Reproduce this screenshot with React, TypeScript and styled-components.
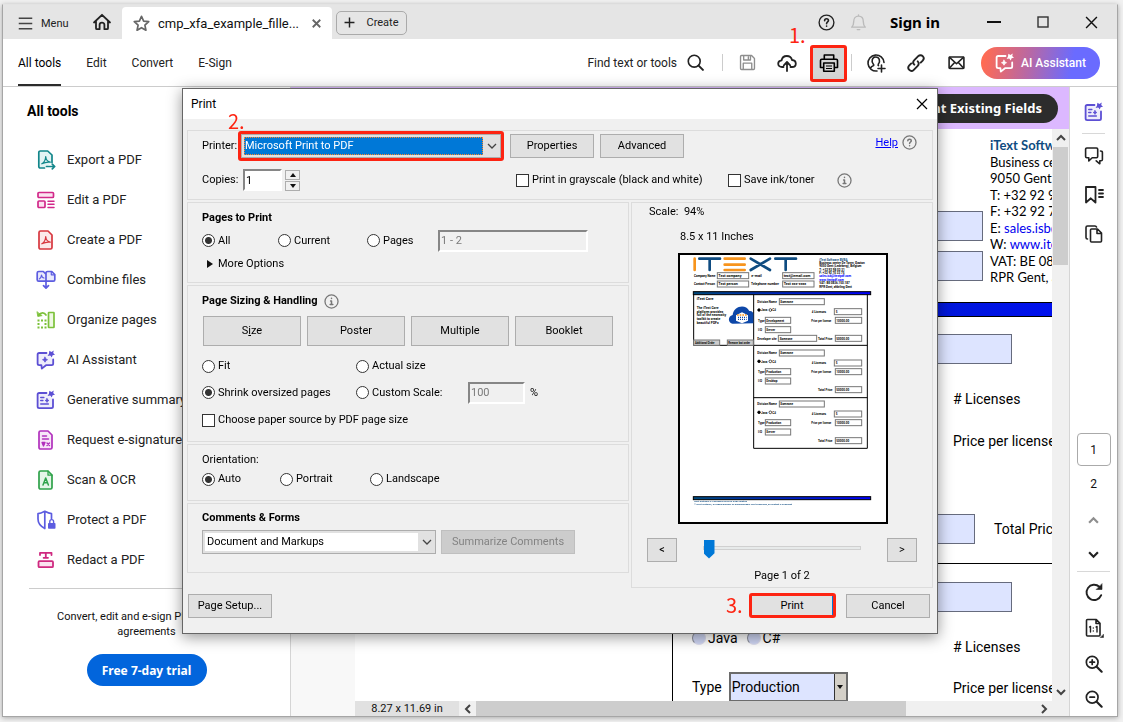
import React from "react";
import styled, { createGlobalStyle, css } from "styled-components";

const ui = `Roboto, "Noto Sans", "Liberation Sans", sans-serif`;

const GlobalStyle = createGlobalStyle`
  *, *::before, *::after { box-sizing: border-box; }
  body { margin: 0; background: #f1f1f1; font-family: ${ui}; font-size: 12px; line-height: 16px; color: #111; }
  button, input, select { font: inherit; color: inherit; margin: 0; padding: 0; border: 0; background: none; border-radius: 0; }
  h1, h2, h3, p, ul { margin: 0; padding: 0; font-weight: inherit; font-size: inherit; list-style: none; }
  fieldset { margin: 0; padding: 0; border: 0; min-width: 0; }
  svg { display: block; flex: none; }
`;

/* ---------- application window ---------- */

const Desktop = styled.div`
  height: 100vh;
  padding: 4px 5px 5px 2px;
  overflow: hidden;
`;

const AppWindow = styled.div`
  height: 100%;
  display: flex;
  flex-direction: column;
  background: #fff;
  border: 1px solid #a6a6a6;
  border-top-color: #e3e3e3;
  box-shadow: 0 1px 5px rgba(0, 0, 0, 0.3);
`;

const TitleBar = styled.header`
  height: 34px;
  flex: none;
  display: flex;
  align-items: center;
  padding-right: 1px;
  background: #e5e5e5;
`;

const FlatButton = styled.button<{ $w: number; $h?: number }>`
  width: ${(p) => p.$w}px;
  height: ${(p) => p.$h ?? 34}px;
  flex: none;
  display: flex;
  align-items: center;
  justify-content: center;
`;

const MenuButton = styled.button`
  display: flex;
  align-items: center;
  gap: 8px;
  width: 80px;
  height: 34px;
  padding: 3px 0 0 15px;
  flex: none;
  font-size: 11px;
  color: #222;
`;

const DocTab = styled.div`
  align-self: flex-end;
  width: 210px;
  height: 32px;
  flex: none;
  display: flex;
  align-items: center;
  gap: 8px;
  margin-left: 2px;
  padding: 1px 10px 0 11px;
  background: #fff;
  border-radius: 4px 4px 0 0;
  font-size: 13px;
`;

const TabName = styled.span`
  flex: 1;
  white-space: nowrap;
`;

const CreateButton = styled.button`
  margin: 1px 0 0 4px;
  height: 24px;
  width: 71px;
  flex: none;
  display: flex;
  align-items: center;
  justify-content: center;
  gap: 11px;
  border: 1px solid #aaa;
  border-radius: 5px;
  font-size: 11px;
  color: #222;
`;

const Spacer = styled.div`
  flex: 1;
`;

const SignIn = styled.button`
  margin: 0 29px 0 15px;
  font-family: "Noto Sans", sans-serif;
  font-weight: 700;
  font-size: 15px;
  color: #000;
  white-space: nowrap;
`;

const Toolbar = styled.nav`
  height: 48px;
  flex: none;
  display: flex;
  align-items: center;
  padding: 0 17px 0 15px;
  border-bottom: 1px solid #ccc;
`;

const ToolTabs = styled.div`
  display: flex;
  gap: 25px;
  align-self: stretch;
`;

const ToolTab = styled.button<{ $active?: boolean }>`
  padding-top: 3px;
  border-bottom: 2px solid ${(p) => (p.$active ? "#2c2c2c" : "transparent")};
  color: ${(p) => (p.$active ? "#000" : "#222")};
  white-space: nowrap;
`;

const SearchButton = styled.button`
  display: flex;
  align-items: center;
  gap: 10px;
  margin-right: 14px;
  color: #222;
  white-space: nowrap;
`;

const Rule = styled.span`
  width: 1px;
  height: 17px;
  margin: 0 4px;
  background: #ccc;
  flex: none;
`;

const PrintButton = styled.button`
  position: relative;
  width: 37px;
  height: 37px;
  margin: 1px 0 0 3px;
  flex: none;
  display: flex;
  align-items: center;
  justify-content: center;
  background: #d5d5d5;
  border: 3px solid #fd2412;
  border-radius: 3px;
`;

const StepNumber = styled.span<{ $left: number; $top: number }>`
  position: absolute;
  left: ${(p) => p.$left}px;
  top: ${(p) => p.$top}px;
  font-family: "Noto Sans CJK SC", "Noto Sans", sans-serif;
  font-size: 20px;
  font-weight: 400;
  line-height: 20px;
  color: #fd2412;
`;

const AssistantButton = styled.button`
  margin-left: 5px;
  width: 119px;
  height: 32px;
  flex: none;
  display: flex;
  align-items: center;
  justify-content: center;
  gap: 6px;
  border-radius: 16px;
  background: linear-gradient(100deg, #ff6b53 4%, #b868a4 40%, #6a6bff 76%);
  color: #fff;
  font-weight: 500;
`;

const Workspace = styled.div`
  flex: 1;
  min-height: 0;
  display: flex;
`;

/* ---------- left tool list ---------- */

const Sidebar = styled.aside`
  width: 288px;
  flex: none;
  border-right: 1px solid #d5d5d5;
  overflow: hidden;
`;

const SideTitle = styled.h2`
  padding: 14px 24px 19px;
  font-size: 14px;
  line-height: 20px;
  font-weight: 700;
  color: #000;
`;

const ToolRow = styled.button`
  height: 40px;
  width: 100%;
  display: flex;
  align-items: center;
  gap: 11px;
  padding-left: 33px;
  font-size: 13px;
  color: #222;
  white-space: nowrap;
`;

const Promo = styled.div`
  margin-left: 26px;
  padding: 20px 26px 0 0;
  border-top: 1px solid #ccc;
  margin-top: 8px;
  display: flex;
  flex-direction: column;
  align-items: center;
  text-align: center;
  font-size: 11px;
  line-height: 15px;
`;

const PromoText = styled.p`
  width: 200px;
`;

const TrialButton = styled.button`
  margin-top: 15px;
  width: 120px;
  height: 32px;
  border-radius: 16px;
  background: #0265dc;
  color: #fff;
  font-family: "Noto Sans", sans-serif;
  font-size: 12px;
  font-weight: 700;
`;

/* ---------- document pane ---------- */

const DocPane = styled.main`
  flex: 1;
  min-width: 0;
  display: flex;
  flex-direction: column;
`;

const FieldsBanner = styled.div`
  height: 42px;
  flex: none;
  display: flex;
  align-items: center;
  justify-content: flex-end;
  padding-right: 11px;
  background: #dcb8ff;
`;

const FieldsButton = styled.button`
  height: 29px;
  padding: 0 16px;
  border-radius: 15px;
  background: #2c2c2c;
  color: #fff;
  font-family: "Noto Sans", sans-serif;
  font-size: 13px;
  font-weight: 700;
`;

const Scroller = styled.div`
  flex: 1;
  min-height: 0;
  display: flex;
  background: #f8f8f8;
`;

const Column = styled.div`
  flex: 1;
  min-width: 0;
  margin-left: 64px;
  display: flex;
  flex-direction: column;
`;

const Sheet = styled.div`
  flex: 1;
  min-height: 0;
  overflow: hidden;
  background: #fff;
  color: #000;
  font-size: 14px;
`;

const SheetHead = styled.div`
  height: 173px;
  display: flex;
  justify-content: flex-end;
`;

const HeadFields = styled.div`
  display: flex;
  flex-direction: column;
  gap: 10px;
  padding-top: 82px;
`;

const FormField = styled.input`
  display: block;
  height: 30px;
  width: 150px;
  background: #dde4ff;
  border: 1px solid #666b7d;
  padding: 0 4px;
`;

const Address = styled.div`
  width: 69px;
  padding: 8px 0 0 7px;
  overflow: hidden;
  white-space: nowrap;
  font-family: Lato, ${ui};
  font-size: 13px;
`;

const AddressLine = styled.p`
  line-height: 17px;
  &:nth-child(even) { line-height: 16px; }
`;

const Company = styled(AddressLine)`
  font-weight: 700;
  color: #0f4c81;
`;

const DocLink = styled.a`
  color: #00e;
  text-decoration: none;
`;

const BlueBar = styled.div`
  height: 15px;
  border: 1px solid #000;
  border-width: 1px 0;
  background: linear-gradient(90deg, #003a70, #0010ee);
`;

const Card = styled.section<{ $pad: number }>`
  margin-left: 317px;
  border-left: 1px solid #000;
  border-bottom: 1px solid #000;
  padding-top: ${(p) => p.$pad}px;
`;

const FieldLine = styled.div`
  padding-left: 189px;
`;

const RightLabel = styled.p<{ $gap: number }>`
  margin-top: ${(p) => p.$gap}px;
  padding-left: 280px;
  line-height: 24px;
  white-space: nowrap;
  overflow: hidden;
`;

const TotalLine = styled.div`
  display: flex;
  align-items: center;
  gap: 19px;
  padding: 0 0 19px 152px;
  margin-top: 61px;
  overflow: hidden;
  white-space: nowrap;
`;

const Split = styled.div`
  display: flex;
  padding-left: 19px;
`;

const SplitLeft = styled.div`
  width: 261px;
  flex: none;
  padding-top: 14px;
`;

const SplitRight = styled.div`
  flex: 1;
  min-width: 0;
  overflow: hidden;
  white-space: nowrap;
  padding-top: 23px;
  line-height: 24px;
`;

const PriceText = styled.p`
  padding-top: 17px;
`;

const LanguageRow = styled.div`
  display: flex;
  gap: 9px;
  height: 24px;
  margin-bottom: 22px;
`;

const LanguageLabel = styled.label`
  display: flex;
  align-items: center;
  gap: 2px;
`;

const SunkenRadio = styled.input.attrs({ type: "radio" })`
  appearance: none;
  width: 14px;
  height: 14px;
  border-radius: 50%;
  background: #cfd6f4;
  border: 1px solid #8c8f9c;
  border-right-color: #dde;
  border-bottom-color: #dde;
`;

const TypeRow = styled.label`
  display: flex;
  align-items: center;
  gap: 7px;
`;

const TypeBox = styled.span`
  width: 119px;
  height: 30px;
  display: flex;
  border: 2px solid #6b6b6b;
  background: #dde4ff;
`;

const TypeSelect = styled.select`
  appearance: none;
  flex: 1;
  min-width: 0;
  padding-left: 1px;
  font-size: 14px;
`;

const TypeArrow = styled.span`
  width: 12px;
  display: flex;
  align-items: center;
  justify-content: center;
  background: #d4d0c8;
  border-left: 1px solid #333;
`;

const BottomBar = styled.div`
  height: 15px;
  flex: none;
  display: flex;
  align-items: center;
  background: #f0f0f0;
`;

const PageSize = styled.span`
  width: 104px;
  align-self: stretch;
  display: flex;
  align-items: center;
  justify-content: center;
  background: #e1e1e1;
  font-size: 11px;
`;

const HTrack = styled.div`
  flex: 1;
  align-self: stretch;
`;

const HThumb = styled.div`
  width: 77%;
  height: 100%;
  background: #cdcdcd;
`;

const VScroll = styled.div`
  width: 17px;
  flex: none;
  display: flex;
  flex-direction: column;
  align-items: center;
  background: #f0f0f0;
`;

const VThumb = styled.div`
  width: 15px;
  height: 118px;
  background: #cdcdcd;
`;

const Rail = styled.aside`
  width: 48px;
  flex: none;
  display: flex;
  flex-direction: column;
  align-items: center;
  border-left: 1px solid #d5d5d5;
  padding-top: 4px;
`;

const RailRule = styled.span<{ $w: number }>`
  width: ${(p) => p.$w}px;
  height: 1px;
  flex: none;
  background: #d8d8d8;
`;

const RailButton = styled.button<{ $h: number }>`
  width: 40px;
  height: ${(p) => p.$h}px;
  flex: none;
  display: flex;
  align-items: center;
  justify-content: center;
`;

const PageInput = styled.input`
  width: 34px;
  height: 33px;
  flex: none;
  border: 1px solid #aaa;
  border-radius: 4px;
  text-align: center;
`;

/* ---------- print dialog ---------- */

const Overlay = styled.div`
  position: fixed;
  inset: 0;
  display: flex;
  align-items: center;
  justify-content: center;
  padding-right: 3px;
`;

const Dialog = styled.form`
  width: 756px;
  border: 1px solid #666;
  background: #f0f0f0;
  box-shadow: 0 3px 14px rgba(0, 0, 0, 0.42);
  font-size: 11px;
  color: #000;
`;

const DialogTitle = styled.div`
  height: 30px;
  display: flex;
  align-items: center;
  justify-content: space-between;
  padding-left: 8px;
  background: #fff;
  font-size: 12px;
`;

const DialogBody = styled.div`
  padding: 11px 4px 15px;
  display: flex;
  flex-direction: column;
  gap: 2px;
`;

const Columns = styled.div`
  display: grid;
  grid-template-columns: 442px 1fr;
  gap: 2px;
`;

const LeftStack = styled.div`
  display: flex;
  flex-direction: column;
  gap: 2px;
`;

const Group = styled.fieldset<{ $h: number }>`
  min-height: ${(p) => p.$h}px;
  border: 1px solid #dcdcdc;
  padding-left: 14px;
  display: flex;
  flex-direction: column;
`;

const Row = styled.div<{ $h: number; $gap?: number }>`
  height: ${(p) => p.$h}px;
  flex: none;
  display: flex;
  align-items: center;
  gap: ${(p) => p.$gap ?? 0}px;
`;

const ButtonRow = styled(Row)`
  padding-left: 1px;
`;

const Heading = styled.h3`
  font-weight: 700;
  font-size: 11px;
`;

const FieldLabel = styled.label`
  width: 36px;
  flex: none;
  white-space: nowrap;
`;

const PushButton = styled.button<{ $w: number; $h?: number }>`
  width: ${(p) => p.$w}px;
  height: ${(p) => p.$h ?? 24}px;
  flex: none;
  background: #e1e1e1;
  border: 1px solid #adadad;
  white-space: nowrap;
  &:disabled { background: #ccc; border-color: #bfbfbf; color: #838383; }
`;

const Marked = styled.div<{ $w: number; $h: number }>`
  position: relative;
  width: ${(p) => p.$w}px;
  height: ${(p) => p.$h}px;
  flex: none;
  display: flex;
  border: 3px solid #fd2412;
  border-radius: 3px;
`;

const Combo = styled.span<{ $w?: number }>`
  ${(p) => (p.$w ? css`width: ${p.$w}px;` : css`flex: 1;`)}
  height: 24px;
  display: flex;
  align-items: center;
  background: #e1e1e1;
  border: 1px solid #adadad;
  padding: 2px 0 2px 2px;
`;

const ComboSelect = styled.select<{ $selected?: boolean }>`
  appearance: none;
  flex: 1;
  min-width: 0;
  height: 18px;
  padding-left: 2px;
  background: ${(p) => (p.$selected ? "#0078d7" : "#fff")};
  color: ${(p) => (p.$selected ? "#fff" : "#000")};
  ${(p) => p.$selected && css`border: 1px dotted #ff8728; padding-left: 0;`}
`;

const ComboArrow = styled.span`
  width: 17px;
  display: flex;
  justify-content: center;
`;

const SunkenInput = styled.input<{ $w: number }>`
  width: ${(p) => p.$w}px;
  height: 22px;
  flex: none;
  border: 2px solid #fff;
  border-top-color: #868686;
  border-left-color: #868686;
  background: #fff;
  padding: 0 1px;
  &:disabled { background: #f0f0f0; color: #7a7a7a; }
`;

const CopiesField = styled.span`
  display: flex;
  align-items: center;
  gap: 3px;
  padding-left: 5px;
`;

const Spinner = styled.span`
  display: flex;
  flex-direction: column;
  gap: 1px;
`;

const SpinButton = styled.button`
  width: 15px;
  height: 10px;
  display: flex;
  align-items: center;
  justify-content: center;
  background: #f0f0f0;
  border: 1px solid #adadad;
`;

const Choice = styled.label<{ $w?: number }>`
  display: flex;
  align-items: center;
  gap: 3px;
  white-space: nowrap;
  ${(p) => p.$w && css`width: ${p.$w}px;`}
`;

const Radio = styled.input.attrs({ type: "radio" })`
  appearance: none;
  width: 13px;
  height: 13px;
  flex: none;
  border: 1px solid #333;
  border-radius: 50%;
  background: #fff;
  &:checked { background: radial-gradient(circle, #333 0 3px, #fff 4px); }
`;

const Check = styled.input.attrs({ type: "checkbox" })`
  appearance: none;
  width: 13px;
  height: 13px;
  flex: none;
  border: 1px solid #333;
  background: #fff;
`;

const Percent = styled.span`
  padding-left: 5px;
`;

const MoreOptions = styled.button`
  display: flex;
  align-items: center;
  gap: 5px;
  padding-left: 5px;
`;

const HelpGroup = styled.span`
  align-self: flex-start;
  height: 23px;
  display: flex;
  align-items: center;
  gap: 4px;
  margin-right: 15px;
`;

const HelpLink = styled.a`
  color: #00f;
  text-decoration: underline;
`;

const InkInfo = styled.span`
  width: 95px;
`;

const PreviewGroup = styled(Group)`
  padding: 0;
`;

const PreviewText = styled.p<{ $left: number; $h: number }>`
  height: ${(p) => p.$h}px;
  line-height: ${(p) => p.$h}px;
  padding-left: ${(p) => p.$left}px;
  white-space: pre;
`;

const PreviewFrame = styled.div`
  margin-left: 46px;
`;

const PagerRow = styled.div`
  height: 24px;
  margin: 14px 15px 0;
  display: flex;
  align-items: center;
  justify-content: space-between;
`;

const PageSlider = styled.input.attrs({ type: "range" })`
  appearance: none;
  width: 158px;
  height: 20px;
  margin: 0 1px 5px 0;
  &::-webkit-slider-runnable-track {
    height: 4px;
    background: #e7eaea;
    border: 1px solid #d0d0d0;
  }
  &::-webkit-slider-thumb {
    appearance: none;
    width: 11px;
    height: 19px;
    margin-top: -7px;
    background: #0078d7;
    clip-path: polygon(0 0, 100% 0, 100% 72%, 50% 100%, 0 72%);
  }
`;

const PageOf = styled.p`
  margin-top: 6px;
  text-align: center;
`;

const Footer = styled.div`
  display: flex;
  align-items: center;
  gap: 10px;
  padding: 3px 3px 0 1px;
`;

const DefaultButton = styled.button`
  flex: 1;
  background: #e1e1e1;
  border-right: 1px solid #0078d7;
`;

/* ---------- drawings ---------- */

type IconProps = { size?: number; color?: string; w?: number; children: React.ReactNode };

const Icon = ({ size = 20, color = "#222", w = 1.6, children }: IconProps) => (
  <svg width={size} height={size} viewBox="0 0 20 20" fill="none" stroke={color} strokeWidth={w} strokeLinecap="round" strokeLinejoin="round" aria-hidden="true">
    {children}
  </svg>
);

const Chevron = ({ dir, color = "#444", size = 10, w = 2 }: { dir: "up" | "down" | "left" | "right"; color?: string; size?: number; w?: number }) => {
  const d = {
    up: "M1 7l4-4 4 4",
    down: "M1 3l4 4 4-4",
    left: "M7 1L3 5l4 4",
    right: "M3 1l4 4-4 4",
  }[dir];
  return (
    <svg width={size} height={size} viewBox="0 0 10 10" fill="none" stroke={color} strokeWidth={w} aria-hidden="true">
      <path d={d} />
    </svg>
  );
};

const Cross = ({ size, w, color }: { size: number; w: number; color: string }) => (
  <svg width={size} height={size} viewBox="0 0 12 12" stroke={color} strokeWidth={w} aria-hidden="true">
    <path d="M1 1l10 10M11 1L1 11" />
  </svg>
);

const Triangle = ({ dir }: { dir: "up" | "down" | "right" }) => {
  const pts = { up: "0,5 3,1 6,5", down: "0,1 3,5 6,1", right: "0,0 6,4 0,8" }[dir];
  return (
    <svg width="6" height={dir === "right" ? 8 : 6} fill="#111" aria-hidden="true">
      <polygon points={pts} />
    </svg>
  );
};

const Sparkle = ({ color }: { color: string }) => (
  <path d="M13.400 .8l2 1.200 2.400-1.400-.6 2.500 1.800 1.700-2.400.5-.8 2.200-1.600-1.900-2.600.3 1.300-2.200z" fill={color} stroke="none" />
);

const ChatSpark = ({ color, size, fill = "none" }: { color: string; size: number; fill?: string }) => (
  <Icon size={size} color={color} w={1.8}>
    <path d="M10.500 3H3.200C2.300 3 1.600 3.700 1.600 4.600v9c0 .9.700 1.600 1.600 1.600h2.200l.4 3.400 4.200-3.400h5.600c.9 0 1.600-.7 1.600-1.600V9.500" fill={fill} />
    <path d="M9 7.200l.8 1.700 1.700.8-1.700.8-.8 1.700-.8-1.700-1.700-.8 1.700-.8z" fill={color} strokeWidth="0.8" />
    <Sparkle color={color} />
  </Icon>
);

const SummarySpark = ({ size = 20 }: { size?: number }) => (
  <Icon size={size} color="#5c4fd4" w={1.8}>
    <path d="M10.500 3H3.200C2.300 3 1.600 3.700 1.600 4.600v12c0 .9.700 1.600 1.600 1.600h12.200c.9 0 1.600-.7 1.600-1.600V9.500" fill="#eeedfb" />
    <path d="M4.800 7.500h3M4.800 10.500h2M4.800 14h7.500" strokeWidth="1.6" />
    <path d="M11 8.600l.6 1.300 1.300.6-1.300.6-.6 1.300-.6-1.300-1.300-.6 1.300-.6z" fill="#5c4fd4" strokeWidth="0.8" />
    <Sparkle color="#5c4fd4" />
  </Icon>
);

const acrobat = "M5.800 13.800c2.600-1.200 3.700-4 3.900-7.300.3 3 1.600 5.200 4.600 5.700-2.800-.4-5.700.2-8.500 1.600z";
const page = "M4.500 1h7.500l4 4v12.500c0 .8-.7 1.500-1.500 1.500h-10c-.8 0-1.500-.7-1.500-1.500v-15C3 1.700 3.700 1 4.500 1z";

const toolIcons: Record<string, React.ReactNode> = {
  export: (
    <Icon color="#12868a" w={1.7}>
      <path d="M8.500 18H4.300c-.8 0-1.500-.7-1.500-1.500V2.500C2.800 1.700 3.500 1 4.300 1h7.400L16 5v7.500" fill="#e2f3f3" />
      <path d={acrobat} strokeWidth="1.2" />
      <path d="M10.500 16.500h8M16.300 14.200l2.400 2.300-2.400 2.300" />
    </Icon>
  ),
  edit: (
    <Icon color="#d2288a" w={1.7}>
      <rect x="2" y="2.500" width="15.500" height="5" rx="1" fill="#fbe3f0" />
      <rect x="2" y="11" width="7" height="6.500" rx="1" fill="#fbe3f0" />
      <path d="M12 11.200h6M12 14.300h6M12 17.400h6" strokeWidth="1.5" />
    </Icon>
  ),
  create: (
    <Icon color="#d7373f" w={1.7}>
      <path d={page} fill="#fbe9ea" />
      <path d={acrobat} strokeWidth="1.2" />
    </Icon>
  ),
  combine: (
    <Icon color="#5c5ce0" w={1.7}>
      <path d="M10 11.200H2.700c-.9 0-1.500-.6-1.500-1.500V3c0-.9.600-1.500 1.500-1.500h4.600L10 4.200zM10 11.200V3c0-.9.600-1.500 1.500-1.500h4.300l3 3v5.200c0 .9-.6 1.500-1.500 1.500z" fill="#e9e9fc" />
      <path d="M3.300 9c1.500-.7 2-2.200 2.200-4 .2 1.500.9 2.800 2.500 3M15.300 1.800v3h3" strokeWidth="1.2" />
      <path d="M10 11.500v6M7.500 15.700l2.500 2.500 2.500-2.500" />
    </Icon>
  ),
  organize: (
    <Icon color="#7cc13a" w={1.7}>
      <rect x="12.500" y="2.500" width="5.500" height="15" rx=".5" fill="#eef8e3" />
      <path d="M2.500 5.200C5 2 8.500 2.400 10 5" />
      <path d="M1 2l.8 4.500 4-.8z" fill="#7cc13a" strokeWidth=".8" />
      <path d="M1.500 10.500h9M1.500 14h2M8.500 14h2M1.500 17.500h9" strokeDasharray="2 1.500" strokeLinecap="butt" strokeWidth="2" />
    </Icon>
  ),
  ai: <ChatSpark color="#5c4fd4" size={20} fill="#eeedfb" />,
  summary: <SummarySpark />,
  request: (
    <Icon color="#b130bd" w={1.7}>
      <path d={page} fill="#f7e6f8" />
      <path d="M6.500 6h4M6.500 9h6" strokeWidth="1.5" />
      <path d="M6 12.500h3l-1.500 3.500zM11 13l2.500 2.500M13.500 13L11 15.500" fill="#b130bd" strokeWidth="1.3" />
    </Icon>
  ),
  scan: (
    <Icon color="#2fa24a" w={1.7}>
      <path d={page} fill="#e5f5e8" />
      <path d="M12 1.200v4h4" strokeWidth="1.3" />
      <path d="M7 15l2.700-7 2.700 7M8 12.800h3.500" strokeWidth="1.5" />
    </Icon>
  ),
  protect: (
    <Icon color="#5c5ce0" w={1.7}>
      <path d="M8.800 18.500C4 16 2 13.500 2 9V3.700C4.500 3.500 6.500 2.500 8.800 1.300 11 2.500 13 3.500 15.500 3.700V8.500M8.800 1.300v17.200" />
      <rect x="12" y="13" width="7.500" height="5.800" rx=".8" fill="#5c5ce0" stroke="none" />
      <path d="M13.800 13v-1.600c0-2.400 3.800-2.400 3.800 0V13" strokeWidth="1.4" />
    </Icon>
  ),
  redact: (
    <Icon color="#cf2a80" w={1.8}>
      <path d="M4 5V2.800h11.500V5M9.800 3v4.800M7.600 7.800H12" />
      <rect x="2.500" y="11.200" width="14.500" height="6" rx="1" fill="#fbe3f0" />
    </Icon>
  ),
};

const InfoMark = ({ help }: { help?: boolean }) => (
  <Icon size={15} color="#777" w={1.7}>
    <circle cx="10" cy="10" r="8.700" />
    {help ? (
      <path d="M7.700 7.800c0-3 4.700-2.900 4.700-.1 0 1.600-2.300 1.800-2.300 3.700M10.100 14.300v.1" strokeWidth="2" />
    ) : (
      <path d="M10 5.800v.2M8.800 9.200H10v4.800M8.200 14h3.600" strokeWidth="2" />
    )}
  </Icon>
);

/* One order block of the page thumbnail. */
const MiniOrder = ({ y, type, target, first }: { y: number; type: string; target: string; first?: boolean }) => (
  <g transform={`translate(0 ${y})`} fontSize="9">
    <g fill="#fff" stroke="#777" strokeWidth="3">
      <rect x="328" y="11" width="135" height="18" />
      <rect x="493" y="41" width="82" height="18" />
      <rect x="286" y="67" width="76" height="18" />
      <rect x="496" y="67" width="79" height="18" />
      <rect x="286" y="95" width="76" height="18" />
      <rect x="496" y="121" width="79" height="18" />
      {first && <rect x="325" y="121" width="115" height="18" />}
    </g>
    <text x="262" y="24">Division Name</text>
    <text x="331" y="24">Someone</text>
    <g fill="none" stroke="#000" strokeWidth="2">
      <circle cx="267" cy="45" r="4" fill="#000" />
      <circle cx="301" cy="45" r="4" />
    </g>
    <text x="273" y="49">Java</text>
    <text x="307" y="49">C#</text>
    <text x="425" y="54"># Licenses</text>
    <text x="497" y="54">5</text>
    <text x="264" y="80">Type</text>
    <text x="289" y="80">{type}</text>
    <text x="424" y="80" fontSize="8">Price per license</text>
    <text x="499" y="80">10000.00</text>
    <text x="264" y="108">I/O</text>
    <text x="289" y="108">{target}</text>
    {first && <text x="262" y="134">Developer site</text>}
    {first && <text x="329" y="134">Someone</text>}
    <text x="444" y="134">Total Price</text>
    <text x="499" y="134">50000.00</text>
  </g>
);

const PagePreview = () => (
  <svg width="210" height="271" viewBox="24 21 630 813" role="img" aria-label="Page preview" fontFamily={ui} fontWeight="700" fontSize="11">
    <defs>
      <linearGradient id="bar" x1="0" x2="1">
        <stop offset="0" stopColor="#004a7c" />
        <stop offset="1" stopColor="#00f" />
      </linearGradient>
    </defs>
    <rect x="27" y="24" width="624" height="807" fill="#fff" stroke="#000" strokeWidth="6" />
    <g strokeWidth="8" strokeLinecap="round" fill="none">
      <path d="M74 38v34M164 38h60M164 56h60M164 72h60" stroke="#f7941d" />
      <path d="M88 38h62M119 38v34M242 38l58 34M300 38l-58 34M316 38h62M347 38v34" stroke="#0f4c81" />
    </g>
    <g fontSize="9">
      <text x="448" y="44" fill="#0f4c81">iText Software BVBA</text>
      <text x="448" y="54">Business center De Toren, Gaston</text>
      <text x="448" y="64">9050 Gent (Ledeberg), Belgium</text>
      <text x="448" y="74">T: +32 92 98 02 31</text>
      <text x="448" y="84">F: +32 92 70 33 75</text>
      <text x="448" y="94" fill="#00f">sales.isb@itextpdf.com</text>
      <text x="448" y="104" fill="#00f">www.itextpdf.com</text>
      <text x="448" y="115">VAT: BE 0836.150.187</text>
      <text x="448" y="126">RPR Gent, afdeling Gent</text>
    </g>
    <g fill="#fff" stroke="#777" strokeWidth="3">
      <rect x="142" y="80" width="94" height="18" />
      <rect x="142" y="105" width="94" height="18" />
      <rect x="338" y="80" width="94" height="18" />
      <rect x="338" y="105" width="94" height="18" />
    </g>
    <text x="72" y="93" fontSize="9">Company Name</text>
    <text x="145" y="93">Test company</text>
    <text x="244" y="93">e-mail</text>
    <text x="341" y="93">test@email.com</text>
    <text x="72" y="118" fontSize="9">Contact Person</text>
    <text x="145" y="118">Test person</text>
    <text x="243" y="118" fontSize="10">Telephone number</text>
    <text x="341" y="118">Test xxx-xxxx</text>
    <rect x="70" y="137" width="532" height="9" fill="url(#bar)" stroke="#000" strokeWidth="3" />
    <path d="M71 146v152h180M251 146v461h341V146M251 298h341M251 455h341" fill="none" stroke="#000" strokeWidth="3" />
    <text x="80" y="161">iText Core</text>
    <g fontSize="10">
      <text x="80" y="189">The iText Core</text>
      <text x="80" y="200">platform provides</text>
      <text x="80" y="211">full of the necessity</text>
      <text x="80" y="222">toolkit to create</text>
      <text x="80" y="233">beautiful PDFs</text>
    </g>
    <path d="M188 233c-14-2-16-22 0-26 2-26 38-36 50-12 8-1 12 4 12 9v28z" fill="#0d47a8" />
    <path d="M198 208l18-9 18 9v16l-18 8-18-8z" fill="#fff" />
    <path d="M201 207h30" stroke="#f7941d" strokeWidth="5" strokeDasharray="5 3" />
    <path d="M204 214h26M204 220h26" stroke="#0d47a8" strokeWidth="4" strokeDasharray="3 3" />
    <rect x="71" y="282" width="78" height="16" fill="#ccc" stroke="#777" strokeWidth="3" />
    <rect x="172" y="282" width="78" height="16" fill="#ccc" stroke="#777" strokeWidth="3" />
    <g fontSize="8">
      <text x="75" y="293">Additional Order</text>
      <text x="175" y="293">Remove last order</text>
    </g>
    <MiniOrder y={147} type="Development" target="Server" first />
    <MiniOrder y={301} type="Production" target="Desktop" />
    <MiniOrder y={454} type="Production" target="Server" />
    <rect x="70" y="752" width="532" height="9" fill="url(#bar)" stroke="#000" strokeWidth="3" />
    <g fontSize="7" fill="#0f4c81">
      <text x="72" y="769">iText Software is a dynamic forms in a pdf solution</text>
      <text x="72" y="778">© iText Software, a leading provider of programmable PDF technology, all content is copyright</text>
    </g>
  </svg>
);

const tools: [string, string][] = [
  ["export", "Export a PDF"],
  ["edit", "Edit a PDF"],
  ["create", "Create a PDF"],
  ["combine", "Combine files"],
  ["organize", "Organize pages"],
  ["ai", "AI Assistant"],
  ["summary", "Generative summary"],
  ["request", "Request e-signatures"],
  ["scan", "Scan & OCR"],
  ["protect", "Protect a PDF"],
  ["redact", "Redact a PDF"],
];

const Magnifier = ({ plus }: { plus?: boolean }) => (
  <Icon size={18} w={1.9}>
    <circle cx="8" cy="8" r="6.500" />
    <path d="M13 13l5.500 5.500" strokeWidth="2.4" />
    <path d={plus ? "M5.500 8h5M8 5.500v5" : "M5.500 8h5"} />
  </Icon>
);

function PrintDialog() {
  return (
    <Dialog aria-label="Print" onSubmit={(e) => e.preventDefault()}>
      <DialogTitle>
        Print
        <FlatButton type="button" $w={30} $h={30} aria-label="Close dialog">
          <Cross size={12} w={1.2} color="#000" />
        </FlatButton>
      </DialogTitle>
      <DialogBody>
        <Group $h={70}>
          <Row $h={30} $gap={6}>
            <Row $h={30}>
              <FieldLabel htmlFor="printer">Printer:</FieldLabel>
              <Marked $w={266} $h={30}>
                <StepNumber $left={-13} $top={-23}>2.</StepNumber>
                <Combo>
                  <ComboSelect id="printer" $selected defaultValue="pdf">
                    <option value="pdf">Microsoft Print to PDF</option>
                  </ComboSelect>
                  <ComboArrow><Chevron dir="down" w={1.3} /></ComboArrow>
                </Combo>
              </Marked>
            </Row>
            <Row $h={30} $gap={6}>
              <PushButton type="button" $w={84}>Properties</PushButton>
              <PushButton type="button" $w={84}>Advanced</PushButton>
            </Row>
            <Spacer />
            <HelpGroup>
              <HelpLink href="#help">Help</HelpLink>
              <InfoMark help />
            </HelpGroup>
          </Row>
          <Row $h={38}>
            <FieldLabel htmlFor="copies">Copies:</FieldLabel>
            <CopiesField>
              <SunkenInput id="copies" $w={39} defaultValue="1" />
              <Spinner>
                <SpinButton type="button" aria-label="More copies"><Triangle dir="up" /></SpinButton>
                <SpinButton type="button" aria-label="Fewer copies"><Triangle dir="down" /></SpinButton>
              </Spinner>
            </CopiesField>
            <Spacer />
            <Choice $w={212}><Check />Print in grayscale (black and white)</Choice>
            <Choice $w={109}><Check />Save ink/toner</Choice>
            <InkInfo><InfoMark /></InkInfo>
          </Row>
        </Group>
        <Columns>
          <LeftStack>
            <Group $h={81}>
              <Row $h={30}><Heading>Pages to Print</Heading></Row>
              <Row $h={15}>
                <Choice $w={76}><Radio name="pages" defaultChecked />All</Choice>
                <Choice $w={89}><Radio name="pages" />Current</Choice>
                <Choice $w={71}><Radio name="pages" />Pages</Choice>
                <SunkenInput $w={150} disabled defaultValue="1 - 2" aria-label="Page range" />
              </Row>
              <Row $h={32}><MoreOptions type="button"><Triangle dir="right" />More Options</MoreOptions></Row>
            </Group>
            <Group $h={157}>
              <Row $h={30} $gap={6}><Heading>Page Sizing &amp; Handling</Heading><InfoMark /></Row>
              <ButtonRow $h={30} $gap={6}>
                <PushButton type="button" $w={98} $h={30}>S<u>i</u>ze</PushButton>
                <PushButton type="button" $w={98} $h={30}>Poster</PushButton>
                <PushButton type="button" $w={98} $h={30}>Multiple</PushButton>
                <PushButton type="button" $w={98} $h={30}>Booklet</PushButton>
              </ButtonRow>
              <Row $h={40}>
                <Choice $w={154}><Radio name="size" />Fit</Choice>
                <Choice><Radio name="size" />Actual size</Choice>
              </Row>
              <Row $h={13}>
                <Choice $w={154}><Radio name="size" defaultChecked />Shrink oversized pages</Choice>
                <Choice $w={112}><Radio name="size" />Custom Scale:</Choice>
                <SunkenInput $w={57} disabled defaultValue="100" aria-label="Custom scale" />
                <Percent>%</Percent>
              </Row>
              <Row $h={42}><Choice><Check />Choose paper source by PDF page size</Choice></Row>
            </Group>
            <Group $h={57}>
              <Row $h={30}>Orientation:</Row>
              <Row $h={8}>
                <Choice $w={78}><Radio name="orient" defaultChecked />Auto</Choice>
                <Choice $w={90}><Radio name="orient" />Portrait</Choice>
                <Choice><Radio name="orient" />Landscape</Choice>
              </Row>
            </Group>
            <Group $h={70}>
              <Row $h={28}><Heading>Comments &amp; Forms</Heading></Row>
              <Row $h={20} $gap={5}>
                <Combo $w={234}>
                  <ComboSelect defaultValue="all" aria-label="Comments and forms">
                    <option value="all">Document and Markups</option>
                  </ComboSelect>
                  <ComboArrow><Chevron dir="down" w={1.3} /></ComboArrow>
                </Combo>
                <PushButton type="button" $w={134} disabled>Summarize Comments</PushButton>
              </Row>
            </Group>
          </LeftStack>
          <PreviewGroup $h={386}>
            <PreviewText $left={17} $h={18}>Scale:  94%</PreviewText>
            <PreviewText $left={48} $h={32}>8.5 x 11 Inches</PreviewText>
            <PreviewFrame><PagePreview /></PreviewFrame>
            <PagerRow>
              <PushButton type="button" $w={30} aria-label="Previous page">&lt;</PushButton>
              <PageSlider min={1} max={2} defaultValue={1} aria-label="Page" />
              <PushButton type="button" $w={30} aria-label="Next page">&gt;</PushButton>
            </PagerRow>
            <PageOf>Page 1 of 2</PageOf>
          </PreviewGroup>
        </Columns>
        <Footer>
          <PushButton type="button" $w={84}>Page Setup...</PushButton>
          <Spacer />
          <Marked $w={87} $h={25}>
            <StepNumber $left={-26} $top={-1}>3.</StepNumber>
            <DefaultButton type="submit">Print</DefaultButton>
          </Marked>
          <PushButton type="button" $w={84}>Cancel</PushButton>
        </Footer>
      </DialogBody>
    </Dialog>
  );
}

function DocumentView() {
  return (
    <DocPane>
      <FieldsBanner>
        <FieldsButton>Highlight Existing Fields</FieldsButton>
      </FieldsBanner>
      <Scroller>
        <Column>
          <Sheet>
            <SheetHead>
              <HeadFields>
                <FormField aria-label="E-mail" />
                <FormField aria-label="Telephone number" />
              </HeadFields>
              <Address>
                <Company>iText Software BVBA</Company>
                <AddressLine>Business center De Toren</AddressLine>
                <AddressLine>9050 Gent (Ledeberg)</AddressLine>
                <AddressLine>T: +32 92 98 02 31</AddressLine>
                <AddressLine>F: +32 92 70 33 75</AddressLine>
                <AddressLine>E: <DocLink href="#mail">sales.isb@itextpdf.com</DocLink></AddressLine>
                <AddressLine>W: <DocLink href="#web">www.itextpdf.com</DocLink></AddressLine>
                <AddressLine>VAT: BE 0836.150.187</AddressLine>
                <AddressLine>RPR Gent, afdeling Gent</AddressLine>
              </Address>
            </SheetHead>
            <BlueBar />
            <Card $pad={17}>
              <FieldLine><FormField aria-label="Division name" /></FieldLine>
              <RightLabel $gap={23}># Licenses</RightLabel>
              <RightLabel $gap={18}>Price per license</RightLabel>
              <TotalLine>
                <FormField aria-label="Developer site" />
                Total Price
              </TotalLine>
            </Card>
            <Card $pad={18}>
              <FieldLine><FormField aria-label="Division name" /></FieldLine>
              <Split>
                <SplitLeft>
                  <LanguageRow>
                    <LanguageLabel><SunkenRadio name="lang" />Java</LanguageLabel>
                    <LanguageLabel><SunkenRadio name="lang" />C#</LanguageLabel>
                  </LanguageRow>
                  <TypeRow>
                    Type
                    <TypeBox>
                      <TypeSelect defaultValue="p"><option value="p">Production</option></TypeSelect>
                      <TypeArrow><Triangle dir="down" /></TypeArrow>
                    </TypeBox>
                  </TypeRow>
                </SplitLeft>
                <SplitRight>
                  <p># Licenses</p>
                  <PriceText>Price per license</PriceText>
                </SplitRight>
              </Split>
            </Card>
          </Sheet>
          <BottomBar>
            <PageSize>8.27 x 11.69 in</PageSize>
            <FlatButton $w={17} $h={15} aria-label="Scroll left"><Chevron dir="left" /></FlatButton>
            <HTrack><HThumb /></HTrack>
            <FlatButton $w={17} $h={15} aria-label="Scroll right"><Chevron dir="right" /></FlatButton>
          </BottomBar>
        </Column>
        <VScroll>
          <FlatButton $w={17} $h={18} aria-label="Scroll up"><Chevron dir="up" /></FlatButton>
          <VThumb />
          <Spacer />
          <FlatButton $w={17} $h={18} aria-label="Scroll down"><Chevron dir="down" /></FlatButton>
          <FlatButton as="span" $w={17} $h={15} />
        </VScroll>
      </Scroller>
    </DocPane>
  );
}

export default function App() {
  return (
    <Desktop>
      <GlobalStyle />
      <AppWindow>
        <TitleBar>
          <MenuButton>
            <Icon size={15} w={2} color="#444"><path d="M1 3h18M1 10h18M1 17h18" strokeLinecap="butt" /></Icon>
            Menu
          </MenuButton>
          <FlatButton $w={37} aria-label="Home">
            <Icon w={1.8}><path d="M2 10.500L10 2.800l8 7.700M4 9v7.200c0 .6.400 1 1 1h2.600v-4.400c0-2.800 4.800-2.800 4.800 0v4.400H15c.6 0 1-.4 1-1V9" /></Icon>
          </FlatButton>
          <DocTab>
            <Icon size={17} color="#666" w={2}><path d="M10 1.500l2.500 5.600 6 .7-4.500 4.100 1.200 6-5.200-3-5.200 3 1.200-6-4.500-4.100 6-.7z" /></Icon>
            <TabName>cmp_xfa_example_fille...</TabName>
            <FlatButton $w={11} $h={20} aria-label="Close tab"><Cross size={9} w={2.4} color="#666" /></FlatButton>
          </DocTab>
          <CreateButton>
            <Icon size={11} w={2.6}><path d="M10 1v18M1 10h18" strokeLinecap="butt" /></Icon>
            Create
          </CreateButton>
          <Spacer />
          <FlatButton $w={32} aria-label="Help">
            <Icon size={17}><circle cx="10" cy="10" r="8.700" /><path d="M7.800 7.800c0-2.900 4.500-2.800 4.500-.1 0 1.600-2.200 1.800-2.200 3.700M10.100 14.200v.1" strokeWidth="1.9" /></Icon>
          </FlatButton>
          <FlatButton $w={32} aria-label="Notifications">
            <Icon size={17} color="#bbb"><path d="M2 15.500h16c-1.800-1.600-2.300-3-2.300-6.200C15.700 5 13.500 2.500 10 2.500S4.300 5 4.300 9.300C4.300 12.500 3.800 13.900 2 15.500zM8.500 18.300h3M10 1v1" /></Icon>
          </FlatButton>
          <SignIn>Sign in</SignIn>
          <FlatButton $w={49} aria-label="Minimize">
            <svg width="14" height="2"><rect width="14" height="2" fill="#111" /></svg>
          </FlatButton>
          <FlatButton $w={49} aria-label="Maximize">
            <svg width="12" height="12"><rect x="1" y="1" width="10" height="10" fill="none" stroke="#333" strokeWidth="1.400" /></svg>
          </FlatButton>
          <FlatButton $w={49} aria-label="Close"><Cross size={13} w={1.3} color="#111" /></FlatButton>
        </TitleBar>
        <Toolbar>
          <ToolTabs>
            <ToolTab $active>All tools</ToolTab>
            <ToolTab>Edit</ToolTab>
            <ToolTab>Convert</ToolTab>
            <ToolTab>E-Sign</ToolTab>
          </ToolTabs>
          <Spacer />
          <SearchButton>
            Find text or tools
            <Icon size={17} w={1.9}><circle cx="8.500" cy="8.500" r="7" /><path d="M13.700 13.700l5 5" strokeWidth="2.4" /></Icon>
          </SearchButton>
          <Rule />
          <FlatButton $w={40} aria-label="Save">
            <Icon size={17} color="#8e8e8e"><path d="M1.800 3c0-.7.500-1.200 1.200-1.200h11.800l3.400 3.400V17c0 .7-.5 1.200-1.200 1.200H3c-.7 0-1.200-.5-1.200-1.200zM5.500 2v5h8V2M5 18v-7.200h10V18M11 3.500v2" /></Icon>
          </FlatButton>
          <FlatButton $w={40} aria-label="Upload">
            <Icon w={1.8}><path d="M6.500 14H5c-2.200 0-3.800-1.300-3.800-3.300S2.800 7.600 4.600 7.400C5 4.800 7 3 9.800 3s4.700 1.800 5.200 4c2.200.2 3.800 1.700 3.800 3.700 0 2-1.600 3.300-3.800 3.300h-1.500M10 18V9.500M6.800 12.300L10 9l3.200 3.300" /></Icon>
          </FlatButton>
          <PrintButton aria-label="Print">
            <StepNumber as="span" $left={-24} $top={-23}>1.</StepNumber>
            <Icon color="#000" w={1.6}><path d="M5.300 6.200V2h9.400v4.200M4.700 14.500H1.500V7.400c0-.7.500-1.200 1.200-1.200h14.600c.7 0 1.200.5 1.200 1.200v7.100h-3.200" strokeLinecap="butt" /><path d="M4.700 10h10.600v8.200H4.700z" /><path d="M7 13h6M7 15.500h6" strokeWidth="1.1" strokeLinecap="butt" /></Icon>
          </PrintButton>
          <Rule />
          <FlatButton $w={40} aria-label="Add person">
            <Icon><path d="M18 9.500A8 8 0 1 0 11 18M4.500 15.500c.4-1.500 1.400-2.300 2.700-2.700.7-.3.700-.9.200-1.500C4.800 8 6.300 4 9.800 4s5 4 2.500 7.300c-.3.500-.3 1 .2 1.300M15.500 12v7M12 15.500h7" /></Icon>
          </FlatButton>
          <FlatButton $w={40} aria-label="Link">
            <Icon w={1.9}><path d="M8.300 11.700c-1.400-1.400-1.300-3.300 0-4.600l3.900-3.900c1.400-1.400 3.300-1.300 4.500-.1s1.300 3.100 0 4.500l-2 2M11.700 8.300c1.400 1.400 1.300 3.300 0 4.600l-3.900 3.900c-1.400 1.400-3.300 1.300-4.500.1s-1.300-3.100 0-4.500l2-2" /></Icon>
          </FlatButton>
          <FlatButton $w={40} aria-label="Mail">
            <Icon size={17} w={1.9}><rect x="1.300" y="3.500" width="17.400" height="13.500" rx="1" /><path d="M1.800 4l8.200 7.500L18.200 4M1.800 16.500l6-6.500M18.200 16.500l-6-6.500" /></Icon>
          </FlatButton>
          <AssistantButton><ChatSpark color="#fff" size={20} />AI Assistant</AssistantButton>
        </Toolbar>
        <Workspace>
          <Sidebar>
            <SideTitle>All tools</SideTitle>
            {tools.map(([key, label]) => (
              <ToolRow key={key}>{toolIcons[key]}{label}</ToolRow>
            ))}
            <Promo>
              <PromoText>Convert, edit and e-sign PDF forms &amp; agreements</PromoText>
              <TrialButton>Free 7-day trial</TrialButton>
            </Promo>
          </Sidebar>
          <DocumentView />
          <Rail>
            <RailButton $h={42} aria-label="Summary"><SummarySpark /></RailButton>
            <RailRule $w={23} />
            <RailButton $h={43} aria-label="Comments">
              <Icon><path d="M2.800 2h9.700c.7 0 1.200.5 1.200 1.200v7.300c0 .7-.5 1.200-1.200 1.200H8.200L4.800 15v-3.300h-2c-.7 0-1.200-.5-1.200-1.200V3.200C1.600 2.500 2.100 2 2.800 2zM16.500 5c1.200 0 1.900.6 1.900 1.500v7c0 .8-.5 1.300-1.300 1.300h-1.300v3l-3.600-3" /></Icon>
            </RailButton>
            <RailButton $h={36} aria-label="Bookmarks">
              <Icon w={1.8}><path d="M2 2h9.500v15.500l-4.700-4.200L2 17.500zM15 5h4M15 8.500h4M15 12h4" /></Icon>
            </RailButton>
            <RailButton $h={42} aria-label="Pages">
              <Icon><path d="M7.500 5h6l4 4v8c0 .6-.4 1-1 1h-9c-.6 0-1-.4-1-1V6c0-.6.400-1 1-1zM13 5.300V9.500h4.200M3.500 15c-.9 0-1.500-.6-1.500-1.500V3.500C2 2.600 2.600 2 3.500 2H11c.8 0 1.300.4 1.500 1" /></Icon>
            </RailButton>
            <Spacer />
            <PageInput defaultValue="1" aria-label="Current page" />
            <RailButton $h={36} as="span">2</RailButton>
            <RailButton $h={36} aria-label="Previous page"><Chevron dir="up" color="#8e8e8e" size={11} /></RailButton>
            <RailButton $h={33} aria-label="Next page"><Chevron dir="down" color="#222" size={11} /></RailButton>
            <RailRule $w={33} />
            <RailButton $h={39} aria-label="Rotate">
              <Icon w={1.9}><path d="M17.200 13.200A7.600 7.600 0 1 1 15.300 4.800" /><path d="M12.500 7.500H18V2z" fill="#222" strokeWidth=".6" /></Icon>
            </RailButton>
            <RailButton $h={34} aria-label="Actual size">
              <Icon><path d="M3.500 1.500h8.800l3.700 3.700V17c0 .6-.4 1-1 1H3.500c-.6 0-1-.4-1-1V2.500c0-.6.400-1 1-1zM12 1.800v3.700h3.700" /><path d="M5.500 9l1-.6V14M12 9l1-.6V14M9.300 10v.1M9.300 13v.1" strokeWidth="1.4" /><path d="M19.500 16.500v3h-3z" fill="#222" strokeWidth=".5" /></Icon>
            </RailButton>
            <RailButton $h={37} aria-label="Zoom in"><Magnifier plus /></RailButton>
            <RailButton $h={34} aria-label="Zoom out"><Magnifier /></RailButton>
          </Rail>
        </Workspace>
      </AppWindow>
      <Overlay><PrintDialog /></Overlay>
    </Desktop>
  );
}
